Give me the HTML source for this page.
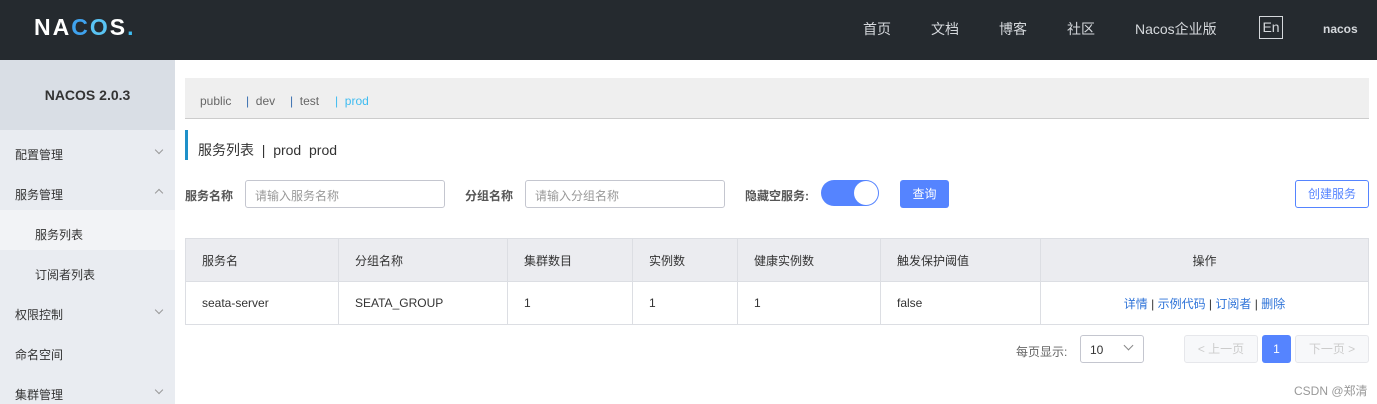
<!DOCTYPE html><html><head><meta charset="utf-8"><style>
*{margin:0;padding:0;box-sizing:border-box}
body{width:1377px;height:404px;overflow:hidden;background:#fff;font-family:"Liberation Sans","Noto Sans CJK SC",sans-serif;font-size:12px;color:#333;position:relative}
.a{position:absolute}
.hd{left:0;top:0;width:1377px;height:60px;background:#252a2f}
.nav{top:19px;color:#d5d8dc;font-size:14px}
.sb{left:0;top:60px;width:175px;height:344px;background:#e9ecf1}
.mi{left:15px;font-size:12px;color:#333}
.chev{left:156px;width:6px;height:6px;border-right:1px solid #999;border-bottom:1px solid #999;transform:rotate(45deg)}
table{border-collapse:collapse;position:absolute;left:185px;top:238px;width:1184px}
td{border:1px solid #dcdee3;height:43px;padding-left:16px;font-size:12px;color:#333}
th{border:1px solid #dcdee3;height:43px;padding-left:16px;font-weight:normal;text-align:left;background:#ebecf0;font-size:12px;color:#333}
.inp{height:28px;border:1px solid #c4c6cf;border-radius:3px;color:#999;padding:6px 9px;font-size:12px}
.lk{color:#2e73d8}
.tb{top:94px;color:#666}
</style></head><body>
<div class="a hd"></div>
<div class="a" style="left:34px;top:14px;font-size:23px;font-weight:bold;color:#fff;letter-spacing:2px">NA<span style="color:#3fa2ee">C</span><span style="color:#59c3f3">O</span>S<span style="color:#3fbcf0">.</span></div>
<div class="a nav" style="left:863px">首页</div>
<div class="a nav" style="left:931px">文档</div>
<div class="a nav" style="left:999px">博客</div>
<div class="a nav" style="left:1067px">社区</div>
<div class="a nav" style="left:1135px">Nacos企业版</div>
<div class="a" style="left:1259px;top:16px;width:24px;height:23px;border:1px solid #d5d8dc;color:#d5d8dc;font-size:14px;text-align:center;line-height:21px">En</div>
<div class="a" style="left:1323px;top:22px;color:#d5d8dc;font-size:12px;font-weight:bold">nacos</div>
<div class="a sb"></div>
<div class="a" style="left:0;top:60px;width:175px;height:70px;background:#d9dee5"></div>
<div class="a" style="left:0;top:60px;width:175px;height:70px;line-height:70px;text-align:center;font-weight:bold;font-size:14px;color:#333">NACOS 2.0.3</div>
<div class="a" style="left:0;top:210px;width:175px;height:40px;background:#f2f3f6"></div>
<div class="a mi" style="top:146px">配置管理</div><div class="a chev" style="top:147px"></div>
<div class="a mi" style="top:186px">服务管理</div><div class="a chev" style="top:190px;transform:rotate(225deg)"></div>
<div class="a mi" style="left:35px;top:226px">服务列表</div>
<div class="a mi" style="left:35px;top:266px">订阅者列表</div>
<div class="a mi" style="top:306px">权限控制</div><div class="a chev" style="top:307px"></div>
<div class="a mi" style="top:346px">命名空间</div>
<div class="a mi" style="top:386px">集群管理</div><div class="a chev" style="top:387px"></div>
<div class="a" style="left:185px;top:78px;width:1184px;height:41px;background:#efefef;border-bottom:1px solid #ccc"></div>
<div class="a tb" style="left:200px">public</div>
<div class="a tb" style="left:246px"><span style="color:#3a6fb0">|</span> &nbsp;dev</div>
<div class="a tb" style="left:290px"><span style="color:#3a6fb0">|</span> &nbsp;test</div>
<div class="a tb" style="left:335px;color:#3fbcf0">| &nbsp;prod</div>
<div class="a" style="left:185px;top:130px;width:3px;height:30px;background:#1e90c9"></div>
<div class="a" style="left:198px;top:140px;font-size:14px;color:#333">服务列表 &nbsp;| &nbsp;prod &nbsp;prod</div>
<div class="a" style="left:185px;top:187px;font-weight:bold;color:#555">服务名称</div>
<div class="a inp" style="left:245px;top:180px;width:200px">请输入服务名称</div>
<div class="a" style="left:465px;top:187px;font-weight:bold;color:#555">分组名称</div>
<div class="a inp" style="left:525px;top:180px;width:200px">请输入分组名称</div>
<div class="a" style="left:745px;top:187px;font-weight:bold;color:#555">隐藏空服务:</div>
<div class="a" style="left:821px;top:180px;width:58px;height:26px;border-radius:13px;background:#5584ff"></div>
<div class="a" style="left:854px;top:181px;width:24px;height:24px;border-radius:12px;background:#fff"></div>
<div class="a" style="left:900px;top:180px;width:49px;height:28px;border-radius:3px;background:#5584ff;color:#fff;text-align:center;line-height:28px">查询</div>
<div class="a" style="left:1295px;top:180px;width:74px;height:28px;border-radius:3px;border:1px solid #5584ff;color:#5584ff;text-align:center;line-height:26px">创建服务</div>
<table><tr><th style="width:153px">服务名</th><th style="width:169px">分组名称</th><th style="width:125px">集群数目</th><th style="width:105px">实例数</th><th style="width:143px">健康实例数</th><th style="width:160px">触发保护阈值</th><th style="text-align:center;padding:0">操作</th></tr>
<tr><td>seata-server</td><td>SEATA_GROUP</td><td>1</td><td>1</td><td>1</td><td>false</td><td style="text-align:center;padding:0"><span class="lk">详情</span> | <span class="lk">示例代码</span> | <span class="lk">订阅者</span> | <span class="lk">删除</span></td></tr></table>
<div class="a" style="left:1016px;top:343px;color:#666">每页显示:</div>
<div class="a" style="left:1080px;top:335px;width:64px;height:28px;border:1px solid #c4c6cf;border-radius:3px;padding:7px 9px;color:#333">10</div>
<div class="a" style="left:1125px;top:342px;width:7px;height:7px;border-right:1px solid #888;border-bottom:1px solid #888;transform:rotate(45deg)"></div>
<div class="a" style="left:1184px;top:335px;width:74px;height:28px;border:1px solid #e6e7eb;border-radius:3px;background:#f7f8fa;color:#ccc;text-align:center;line-height:26px">&lt; 上一页</div>
<div class="a" style="left:1262px;top:335px;width:29px;height:28px;border-radius:3px;background:#5584ff;color:#fff;text-align:center;line-height:28px">1</div>
<div class="a" style="left:1295px;top:335px;width:74px;height:28px;border:1px solid #e6e7eb;border-radius:3px;background:#f7f8fa;color:#ccc;text-align:center;line-height:26px">下一页 &gt;</div>
<div class="a" style="left:1294px;top:382px;color:#999">CSDN @郑清</div>
</body></html>
